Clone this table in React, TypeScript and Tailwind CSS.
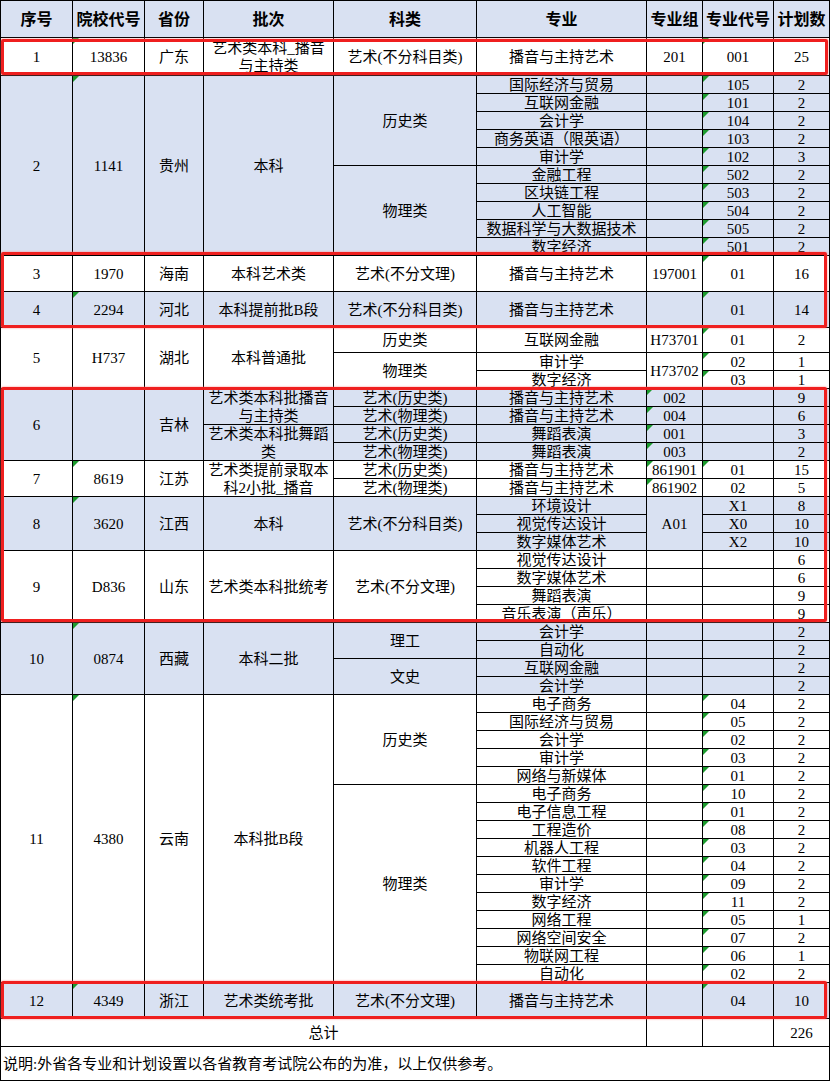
import React from 'react';

const BLUE = 'bg-[#d9e1f2]';
const WHITE = 'bg-white';

const RS: Record<number, string> = {
  1: '',
  2: 'row-span-2',
  3: 'row-span-3',
  4: 'row-span-4',
  5: 'row-span-5',
  10: 'row-span-10',
  11: 'row-span-11',
  16: 'row-span-16',
};

const CS: Record<number, string> = { 1: '', 6: 'col-span-6', 9: 'col-span-9' };

type CellProps = {
  rs?: number;
  cs?: number;
  bg: string;
  tri?: boolean;
  bold?: boolean;
  left?: boolean;
  children?: React.ReactNode;
};

function Cell({ rs = 1, cs = 1, bg, tri, bold, left, children }: CellProps) {
  return (
    <div
      className={`relative flex items-center overflow-hidden whitespace-nowrap border-r border-b border-black leading-[18px] ${
        left ? 'justify-start pl-[2px]' : 'justify-center text-center'
      } ${bold ? 'font-bold text-[16px]' : 'text-[15px]'} ${RS[rs]} ${CS[cs]} ${bg}`}
    >
      {tri && (
        <span className="absolute left-0 top-0 h-[6px] w-[6px] bg-[#1c9b2e] [clip-path:polygon(0_0,100%_0,0_100%)]" />
      )}
      <span>{children}</span>
    </div>
  );
}

// one sub-row on the right side: 专业 / 专业组 / 专业代号 / 计划数
type Sub = { major: string; group?: string; code?: string; plan: string; gTri?: boolean; cTri?: boolean };

function SubRow({ s, bg }: { s: Sub; bg: string }) {
  return (
    <>
      <Cell bg={bg}>{s.major}</Cell>
      <Cell bg={bg} tri={s.gTri}>{s.group ?? ''}</Cell>
      <Cell bg={bg} tri={s.cTri}>{s.code ?? ''}</Cell>
      <Cell bg={bg}>{s.plan}</Cell>
    </>
  );
}

const guizhouHist: Sub[] = [
  { major: '国际经济与贸易', code: '105', plan: '2', cTri: true },
  { major: '互联网金融', code: '101', plan: '2', cTri: true },
  { major: '会计学', code: '104', plan: '2', cTri: true },
  { major: '商务英语（限英语）', code: '103', plan: '2', cTri: true },
  { major: '审计学', code: '102', plan: '3', cTri: true },
];

const guizhouPhys: Sub[] = [
  { major: '金融工程', code: '502', plan: '2', cTri: true },
  { major: '区块链工程', code: '503', plan: '2', cTri: true },
  { major: '人工智能', code: '504', plan: '2', cTri: true },
  { major: '数据科学与大数据技术', code: '505', plan: '2', cTri: true },
  { major: '数字经济', code: '501', plan: '2', cTri: true },
];

const jiangxi: Sub[] = [
  { major: '视觉传达设计', code: 'X0', plan: '10' },
  { major: '数字媒体艺术', code: 'X2', plan: '10' },
];

const shandong: Sub[] = [
  { major: '视觉传达设计', plan: '6' },
  { major: '数字媒体艺术', plan: '6' },
  { major: '舞蹈表演', plan: '9' },
  { major: '音乐表演（声乐）', plan: '9' },
];

const yunnanHist: Sub[] = [
  { major: '电子商务', code: '04', plan: '2', cTri: true },
  { major: '国际经济与贸易', code: '05', plan: '2', cTri: true },
  { major: '会计学', code: '02', plan: '2', cTri: true },
  { major: '审计学', code: '03', plan: '2', cTri: true },
  { major: '网络与新媒体', code: '01', plan: '2', cTri: true },
];

const yunnanPhys: Sub[] = [
  { major: '电子商务', code: '10', plan: '2', cTri: true },
  { major: '电子信息工程', code: '01', plan: '2', cTri: true },
  { major: '工程造价', code: '08', plan: '2', cTri: true },
  { major: '机器人工程', code: '03', plan: '2', cTri: true },
  { major: '软件工程', code: '04', plan: '2', cTri: true },
  { major: '审计学', code: '09', plan: '2', cTri: true },
  { major: '数字经济', code: '11', plan: '2', cTri: true },
  { major: '网络工程', code: '05', plan: '1', cTri: true },
  { major: '网络空间安全', code: '07', plan: '2', cTri: true },
  { major: '物联网工程', code: '06', plan: '1', cTri: true },
  { major: '自动化', code: '02', plan: '2', cTri: true },
];

const headers = ['序号', '院校代号', '省份', '批次', '科类', '专业', '专业组', '专业代号', '计划数'];

export default function App() {
  return (
    <div className="relative w-[830px] bg-white text-black font-['Liberation_Serif','Noto_Sans_CJK_SC',serif]">
      <div className="grid grid-cols-[72px_72px_59px_130px_143px_170px_56px_71px_56px] grid-rows-[37px_38px_repeat(10,18px)_36px_36px_25px_18px_18px_repeat(33,18px)_36px_28px_34px] border-l border-t border-black">
        {/* Header */}
        {headers.map((h) => (
          <Cell key={h} bg={BLUE} bold>
            <span className="font-['Noto_Sans_CJK_SC',sans-serif]">{h}</span>
          </Cell>
        ))}

        {/* 1 广东 */}
        <Cell bg={WHITE}>1</Cell>
        <Cell bg={WHITE} tri>13836</Cell>
        <Cell bg={WHITE}>广东</Cell>
        <Cell bg={WHITE}>
          艺术类本科_播音
          <br />
          与主持类
        </Cell>
        <Cell bg={WHITE}>艺术(不分科目类)</Cell>
        <Cell bg={WHITE}>播音与主持艺术</Cell>
        <Cell bg={WHITE}>201</Cell>
        <Cell bg={WHITE} tri>001</Cell>
        <Cell bg={WHITE}>25</Cell>

        {/* 2 贵州 */}
        <Cell bg={BLUE} rs={10}>2</Cell>
        <Cell bg={BLUE} rs={10} tri>1141</Cell>
        <Cell bg={BLUE} rs={10}>贵州</Cell>
        <Cell bg={BLUE} rs={10}>本科</Cell>
        <Cell bg={BLUE} rs={5}>历史类</Cell>
        {guizhouHist.map((s, i) => (
          <SubRow key={'gh' + i} s={s} bg={BLUE} />
        ))}
        <Cell bg={BLUE} rs={5}>物理类</Cell>
        {guizhouPhys.map((s, i) => (
          <SubRow key={'gp' + i} s={s} bg={BLUE} />
        ))}

        {/* 3 海南 */}
        <Cell bg={WHITE}>3</Cell>
        <Cell bg={WHITE}>1970</Cell>
        <Cell bg={WHITE}>海南</Cell>
        <Cell bg={WHITE}>本科艺术类</Cell>
        <Cell bg={WHITE}>艺术(不分文理)</Cell>
        <Cell bg={WHITE}>播音与主持艺术</Cell>
        <Cell bg={WHITE}>197001</Cell>
        <Cell bg={WHITE} tri>01</Cell>
        <Cell bg={WHITE}>16</Cell>

        {/* 4 河北 */}
        <Cell bg={BLUE}>4</Cell>
        <Cell bg={BLUE} tri>2294</Cell>
        <Cell bg={BLUE}>河北</Cell>
        <Cell bg={BLUE}>本科提前批B段</Cell>
        <Cell bg={BLUE}>艺术(不分科目类)</Cell>
        <Cell bg={BLUE}>播音与主持艺术</Cell>
        <Cell bg={BLUE}></Cell>
        <Cell bg={BLUE} tri>01</Cell>
        <Cell bg={BLUE}>14</Cell>

        {/* 5 湖北 */}
        <Cell bg={WHITE} rs={3}>5</Cell>
        <Cell bg={WHITE} rs={3}>H737</Cell>
        <Cell bg={WHITE} rs={3}>湖北</Cell>
        <Cell bg={WHITE} rs={3}>本科普通批</Cell>
        <Cell bg={WHITE}>历史类</Cell>
        <Cell bg={WHITE}>互联网金融</Cell>
        <Cell bg={WHITE}>H73701</Cell>
        <Cell bg={WHITE} tri>01</Cell>
        <Cell bg={WHITE}>2</Cell>
        <Cell bg={WHITE} rs={2}>物理类</Cell>
        <Cell bg={WHITE}>审计学</Cell>
        <Cell bg={WHITE} rs={2}>H73702</Cell>
        <Cell bg={WHITE} tri>02</Cell>
        <Cell bg={WHITE}>1</Cell>
        <Cell bg={WHITE}>数字经济</Cell>
        <Cell bg={WHITE} tri>03</Cell>
        <Cell bg={WHITE}>1</Cell>

        {/* 6 吉林 */}
        <Cell bg={BLUE} rs={4}>6</Cell>
        <Cell bg={BLUE} rs={4}></Cell>
        <Cell bg={BLUE} rs={4}>吉林</Cell>
        <Cell bg={BLUE} rs={2}>
          艺术类本科批播音
          <br />
          与主持类
        </Cell>
        <Cell bg={BLUE}>艺术(历史类)</Cell>
        <SubRow bg={BLUE} s={{ major: '播音与主持艺术', group: '002', plan: '9', gTri: true }} />
        <Cell bg={BLUE}>艺术(物理类)</Cell>
        <SubRow bg={BLUE} s={{ major: '播音与主持艺术', group: '004', plan: '6', gTri: true }} />
        <Cell bg={BLUE} rs={2}>
          艺术类本科批舞蹈
          <br />
          类
        </Cell>
        <Cell bg={BLUE}>艺术(历史类)</Cell>
        <SubRow bg={BLUE} s={{ major: '舞蹈表演', group: '001', plan: '3', gTri: true }} />
        <Cell bg={BLUE}>艺术(物理类)</Cell>
        <SubRow bg={BLUE} s={{ major: '舞蹈表演', group: '003', plan: '2', gTri: true }} />

        {/* 7 江苏 */}
        <Cell bg={WHITE} rs={2}>7</Cell>
        <Cell bg={WHITE} rs={2} tri>8619</Cell>
        <Cell bg={WHITE} rs={2}>江苏</Cell>
        <Cell bg={WHITE} rs={2}>
          艺术类提前录取本
          <br />
          科2小批_播音
        </Cell>
        <Cell bg={WHITE}>艺术(历史类)</Cell>
        <SubRow bg={WHITE} s={{ major: '播音与主持艺术', group: '861901', code: '01', plan: '15', gTri: true, cTri: true }} />
        <Cell bg={WHITE}>艺术(物理类)</Cell>
        <SubRow bg={WHITE} s={{ major: '播音与主持艺术', group: '861902', code: '02', plan: '5', gTri: true }} />

        {/* 8 江西 */}
        <Cell bg={BLUE} rs={3}>8</Cell>
        <Cell bg={BLUE} rs={3} tri>3620</Cell>
        <Cell bg={BLUE} rs={3}>江西</Cell>
        <Cell bg={BLUE} rs={3}>本科</Cell>
        <Cell bg={BLUE} rs={3}>艺术(不分科目类)</Cell>
        <Cell bg={BLUE}>环境设计</Cell>
        <Cell bg={BLUE} rs={3}>A01</Cell>
        <Cell bg={BLUE}>X1</Cell>
        <Cell bg={BLUE}>8</Cell>
        {jiangxi.map((s, i) => (
          <React.Fragment key={'jx' + i}>
            <Cell bg={BLUE}>{s.major}</Cell>
            <Cell bg={BLUE}>{s.code}</Cell>
            <Cell bg={BLUE}>{s.plan}</Cell>
          </React.Fragment>
        ))}

        {/* 9 山东 */}
        <Cell bg={WHITE} rs={4}>9</Cell>
        <Cell bg={WHITE} rs={4}>D836</Cell>
        <Cell bg={WHITE} rs={4}>山东</Cell>
        <Cell bg={WHITE} rs={4}>艺术类本科批统考</Cell>
        <Cell bg={WHITE} rs={4}>艺术(不分文理)</Cell>
        {shandong.map((s, i) => (
          <SubRow key={'sd' + i} s={s} bg={WHITE} />
        ))}

        {/* 10 西藏 */}
        <Cell bg={BLUE} rs={4}>10</Cell>
        <Cell bg={BLUE} rs={4} tri>0874</Cell>
        <Cell bg={BLUE} rs={4}>西藏</Cell>
        <Cell bg={BLUE} rs={4}>本科二批</Cell>
        <Cell bg={BLUE} rs={2}>理工</Cell>
        <SubRow bg={BLUE} s={{ major: '会计学', plan: '2' }} />
        <SubRow bg={BLUE} s={{ major: '自动化', plan: '2' }} />
        <Cell bg={BLUE} rs={2}>文史</Cell>
        <SubRow bg={BLUE} s={{ major: '互联网金融', plan: '2' }} />
        <SubRow bg={BLUE} s={{ major: '会计学', plan: '2' }} />

        {/* 11 云南 */}
        <Cell bg={WHITE} rs={16}>11</Cell>
        <Cell bg={WHITE} rs={16} tri>4380</Cell>
        <Cell bg={WHITE} rs={16}>云南</Cell>
        <Cell bg={WHITE} rs={16}>本科批B段</Cell>
        <Cell bg={WHITE} rs={5}>历史类</Cell>
        {yunnanHist.map((s, i) => (
          <SubRow key={'yh' + i} s={s} bg={WHITE} />
        ))}
        <Cell bg={WHITE} rs={11}>物理类</Cell>
        {yunnanPhys.map((s, i) => (
          <SubRow key={'yp' + i} s={s} bg={WHITE} />
        ))}

        {/* 12 浙江 */}
        <Cell bg={BLUE}>12</Cell>
        <Cell bg={BLUE} tri>4349</Cell>
        <Cell bg={BLUE}>浙江</Cell>
        <Cell bg={BLUE}>艺术类统考批</Cell>
        <Cell bg={BLUE}>艺术(不分文理)</Cell>
        <Cell bg={BLUE}>播音与主持艺术</Cell>
        <Cell bg={BLUE}></Cell>
        <Cell bg={BLUE} tri>04</Cell>
        <Cell bg={BLUE}>10</Cell>

        {/* 总计 */}
        <Cell bg={WHITE} cs={6}>总计</Cell>
        <Cell bg={WHITE}></Cell>
        <Cell bg={WHITE}></Cell>
        <Cell bg={WHITE}>226</Cell>

        {/* 说明 */}
        <Cell bg={WHITE} cs={9} left>
          说明:外省各专业和计划设置以各省教育考试院公布的为准，以上仅供参考。
        </Cell>
      </div>

      {/* red highlight boxes */}
      <div className="pointer-events-none absolute left-[1px] top-[39px] h-[36px] w-[827px] rounded-[2px] border-[3px] border-[#ef1f1f] shadow-[0_0_2px_#ff7a7a]" />
      <div className="pointer-events-none absolute left-[1px] top-[252px] h-[76px] w-[826px] rounded-[2px] border-[3px] border-[#ef1f1f] shadow-[0_0_2px_#ff7a7a]" />
      <div className="pointer-events-none absolute left-[1px] top-[387px] h-[235px] w-[826px] rounded-[2px] border-[3px] border-[#ef1f1f] shadow-[0_0_2px_#ff7a7a]" />
      <div className="pointer-events-none absolute left-[1px] top-[981px] h-[38px] w-[826px] rounded-[2px] border-[3px] border-[#ef1f1f] shadow-[0_0_2px_#ff7a7a]" />
    </div>
  );
}
